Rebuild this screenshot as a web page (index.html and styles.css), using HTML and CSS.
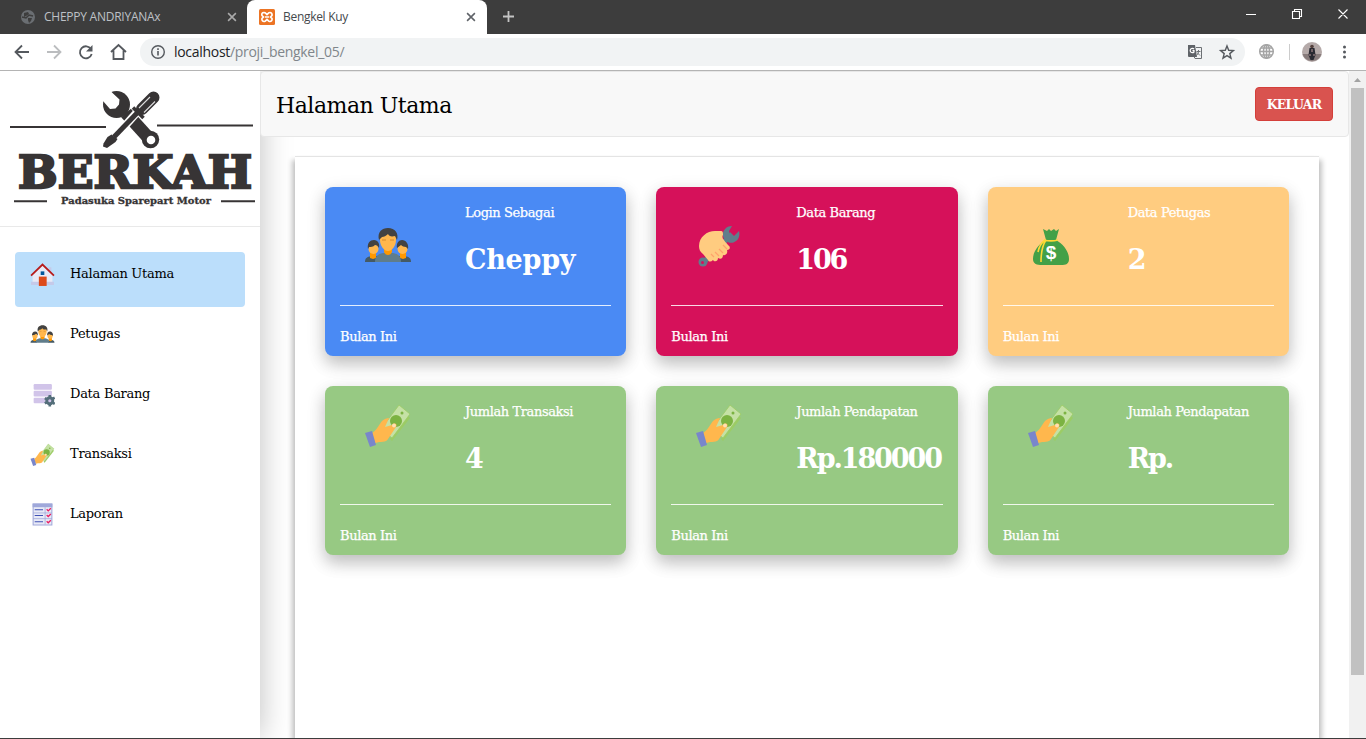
FILE: index.html
```html
<!DOCTYPE html>
<html lang="id">
<head>
<meta charset="utf-8">
<title>Bengkel Kuy</title>
<link rel="stylesheet" href="styles.css">
</head>
<body>
<svg class="sprite" aria-hidden="true">
  <symbol id="people" viewBox="0 0 48 48">
    <path fill="#455a64" d="M1 40c0-4 2-5 6-6h6v6zM47 40c0-4-2-5-6-6h-6v6z"/>
    <path fill="#ff9800" d="M6 29h6v7l-3 1-3-1zM36 29h6v7l-3 1-3-1z"/>
    <circle cx="9.500" cy="27" r="5" fill="#ffb74d"/><circle cx="38.500" cy="27" r="5" fill="#ffb74d"/>
    <path fill="#424242" d="M4 27c-1-6 2-9 6-9 4 0 6 4 5 8-1-2-2-3-4-3-2 2-4 2-6 2zM33 26c-1-5 2-8 5-8 4 0 7 4 6 9l-2-2c-2 0-4-1-5-2z"/>
    <path fill="#607d8b" d="M11 40c0-6 3-8 8-9h10c5 1 8 3 8 9z"/>
    <path fill="#ff9800" d="M20 25h8v5c-1 2-2 3-4 3s-3-1-4-3z"/>
    <path fill="#ffb74d" d="M16 14c0-5 4-7 8-7s8 2 8 7v4c0 6-4 11-8 11s-8-5-8-11z"/>
    <path fill="#424242" d="M15 18C13 10 18 6 24 6c7 0 11 5 9 12l-2-4c-4 1-6 0-7-2-2 2-4 3-6 3z"/>
    <path stroke="#d58b2d" stroke-width="1" d="M18 18h4M26 18h4"/>
  </symbol>
  <symbol id="money" viewBox="0 0 48 48">
    <path fill="#9ccc65" d="M46 17 28 40l-2-2L43 14z"/>
    <path fill="#c5e1a5" d="M35 4 46 13 28 37 17 28z"/>
    <path fill="none" stroke="#9ccc65" stroke-width=".8" d="M35 4 46 13 28 37 17 28z"/>
    <circle cx="32" cy="20" r="6" fill="#7cb342"/><circle cx="38" cy="12" r="1.500" fill="#7cb342"/>
    <path fill="#ffb74d" d="M8 32c4-2 7-8 10-12 2-2 5-3 7-3l-4 9 7-2c2-3 6-1 4 2l-8 12c-2 4-7 2-13 4z"/>
    <circle cx="30" cy="24.500" r="2" fill="#ffe0b2"/>
    <path fill="#7986cb" d="m1 32 7-2 4 14-6 2z"/>
  </symbol>
</svg>
<div class="window">
  <header class="tabs">
    <div class="tab">
      <svg class="fav" viewBox="0 0 16 16"><circle cx="8" cy="8" r="7" fill="#6a6e72"/><path d="M4 4l4-1 1 2-3 2-2 1M8 9l4 0-1 3-2 2-1-3z" fill="#3d3d3d"/><path d="M2 8l4 1 3-3 4 1" fill="none" stroke="#3d3d3d" stroke-width="1.500"/></svg>
      <span class="tab-title t1">CHEPPY ANDRIYANAx</span>
      <svg class="close" viewBox="0 0 9 9"><path d="M1 1l7 7M8 1L1 8"/></svg>
    </div>
    <div class="tab active">
      <svg class="fav" viewBox="0 0 16 16"><rect width="16" height="16" rx="1.500" fill="#ec7424"/><path d="M5 3.500C3 3.500 2.500 5 3 6.500L4.500 8 3 9.500C2.500 11.500 4 13 6 12.300L8 10.500l2 1.800c2 .7 3.500-.8 3-2.800L11.500 8 13 6.500C13.500 4.500 12 3 10 3.700L8 5.500 6 3.700z" fill="none" stroke="#fff" stroke-width="1.700"/><path d="M6 8h4" stroke="#fff" stroke-width="1.500"/></svg>
      <span class="tab-title t2">Bengkel Kuy</span>
      <svg class="close" viewBox="0 0 9 9"><path d="M1 1l7 7M8 1L1 8"/></svg>
    </div>
    <svg class="plus" viewBox="0 0 13 13"><path d="M6.500 1v11M1 6.500h11"/></svg>
    <svg class="controls" viewBox="0 0 120 34"><path d="M0 14.500h10M46.500 11.500h7v7h-7zM48.500 11.500v-2h7v7h-2M92.500 9.500l9 9M101.500 9.500l-9 9"/></svg>
  </header>
  <div class="toolbar">
    <svg class="nav-icons" viewBox="0 0 140 36">
      <g fill="none" stroke="#55595e" stroke-width="1.800"><path d="M29 18H16M22 11.500 15.500 18l6.500 6.500"/><path stroke="#bbbdbf" d="M47 18h13M54 11.500l6.500 6.500-6.500 6.500"/><path d="M91 15a6 6 0 1 0 .7 5"/><path d="M111 18l7.500-7 7.500 7M113.500 16.500V25h10v-8.500"/></g><path fill="#55595e" d="M92.500 11v6.500H86z"/>
    </svg>
    <div class="address">
      <svg class="info" viewBox="0 0 16 16"><circle cx="8" cy="8" r="6.300" fill="none" stroke="#55595e" stroke-width="1.400"/><path stroke="#55595e" stroke-width="1.600" d="M8 7v4.500M8 4.300v1.600"/></svg>
      <span class="url">localhost<span>/proji_bengkel_05/</span></span>
      <svg class="address-icons" viewBox="0 0 50 20"><path fill="#5f6368" d="M1 3h7l2 12H2q-1 0-1-1z"/><path fill="none" stroke="#6c7074" d="M9 5.500h5.500v11H8l-1-2M9.500 9.500h4M11.500 8v1.500c0 2-1 3-2 4M10 10.500l3 3"/><path fill="none" stroke="#fff" stroke-width="1.200" d="M7 7a2.200 2.200 0 1 0 0 3V8.700H5.500"/><path fill="none" stroke="#55595e" stroke-width="1.400" d="m40 4 1.700 4.300 4.700.3-3.600 3 1.200 4.600-4-2.500-4 2.500 1.200-4.600-3.600-3 4.700-.3z"/></svg>
    </div>
    <svg class="extras" viewBox="0 0 121 36"><g fill="none" stroke="#a5a5a5" stroke-width="1.500"><circle cx="21.500" cy="17.500" r="6.800"/><ellipse cx="21.500" cy="17.500" rx="3" ry="6.800"/><path d="M21.500 11v13M15 17.500h13M16 14h11M16 21h11"/></g><path d="M44.500 10v16" stroke="#ccc"/><circle cx="67" cy="18" r="10" fill="#b5aaa9"/><path fill="#877b7b" d="M57.500 20h19a10 10 0 0 1-19 0z"/><path fill="#292a32" d="M64.500 14h5l1 7-2 5h-3l-2-5z"/><circle cx="67" cy="12.500" r="1.800" fill="#54403c"/><path stroke="#b99" d="M67 15v3M64 21h2M68 21h2"/><g fill="#55595e"><circle cx="99.500" cy="13" r="1.500"/><circle cx="99.500" cy="18" r="1.500"/><circle cx="99.500" cy="23" r="1.500"/></g></svg>
  </div>
  <div class="page">
    <aside class="sidebar">
      <div class="brand">
        <svg viewBox="0 71 260 155">
          <circle cx="116.500" cy="104.500" r="13.500" fill="#373435"/>
          <path d="M126 113 150 139.500" stroke="#373435" stroke-width="13"/>
          <circle cx="150.500" cy="139.500" r="8.700" fill="#373435"/>
          <path fill="#fff" d="M101 94 109 88 112 92.500 119.500 99.500 119 104.500 115.500 108.500 110 109 103 101z"/>
          <circle cx="151" cy="140" r="4.300" fill="#fff"/>
          <g fill="none" stroke="#fff"><path stroke-width="8" d="M139 110 116 136"/><path stroke-width="14.500" d="M139 112 145 106"/></g>
          <g fill="none" stroke="#373435"><path stroke-width="5" d="M139 111 114 137"/><path stroke-width="12" stroke-linecap="round" d="M142 109 153.500 97.500"/><path stroke-width="3.500" d="M133 107.500 143.500 118"/></g>
          <path fill="#373435" d="M111.500 134.500 117.500 139 115.500 142 107 148 103 146.500 103.500 143.500 107.500 137z"/>
          <path d="M139 108 150 97M144 112.500 155 101.500" stroke="#ddd" stroke-width="1.100"/>
          <path d="M10 127h96M157 125.400h96" stroke="#373435" stroke-width="2"/>
          <path d="M14 201.300h33M221 201.300h34" stroke="#373435" stroke-width="2"/>
          <text class="logo-main" x="18" y="187.800" textLength="234" lengthAdjust="spacingAndGlyphs">BERKAH</text>
          <text class="logo-sub" x="61" y="204" textLength="150" lengthAdjust="spacingAndGlyphs">Padasuka Sparepart Motor</text>
        </svg>
      </div>
      <nav class="menu">
        <a class="item current"><svg viewBox="0 0 48 48"><path fill="#e8eaf6" d="M24 6 5 23v19h38V23z"/><path fill="#c5cae9" d="M2 38h44v6H2zM36 10h5v12l-5-4z"/><path fill="none" stroke="#b71c1c" stroke-width="3.500" d="M2 26 24 5l22 21"/><path fill="#01579b" d="M20.500 18h7v7h-7z"/><path fill="#dd4a19" d="M17 28h15v18H17z"/></svg><span>Halaman Utama</span></a>
        <a class="item"><svg><use href="#people"/></svg><span>Petugas</span></a>
        <a class="item"><svg viewBox="0 0 48 48"><g fill="#d1c4e9"><rect x="7" y="4" width="35" height="11" rx="2"/><rect x="7" y="17" width="35" height="11" rx="2"/><rect x="7" y="30" width="35" height="11" rx="2"/></g><g fill="#546e7a"><circle cx="38" cy="36" r="8.500"/><path d="M35.500 25h5v22h-5zM27.200 33.200l2.500-4.300 19 11-2.500 4.300zM29.700 43.200l-2.500-4.300 19-11 2.500 4.300z"/></g><circle cx="38" cy="36" r="3" fill="#d1c4e9"/></svg><span>Data Barang</span></a>
        <a class="item"><svg><use href="#money"/></svg><span>Transaksi</span></a>
        <a class="item"><svg viewBox="0 0 48 48"><path fill="#e8eaf6" stroke="#9fa8da" stroke-width="2" d="M6 4h36v40H6z"/><path fill="#9fa8da" d="M5 3h38v7H5z"/><path stroke="#9fa8da" stroke-width="1.500" d="M6 21h36M6 32h36M29 10v33"/><path stroke="#3f51b5" stroke-width="2" d="M9 15h16M9 26h16M9 38h16"/><path fill="none" stroke="#e91e63" stroke-width="2.500" d="m32 14 3 3 5-5M32 25l3 3 5-5M32 37l3 3 5-5"/></svg><span>Laporan</span></a>
      </nav>
    </aside>
    <main class="content">
      <div class="topbar"><h1>Halaman Utama</h1><a class="logout">KELUAR</a></div>
      <section class="panel">
        <article class="card blue"><div class="card-body"><svg class="card-icon"><use href="#people"/></svg><div><p class="label">Login Sebagai</p><p class="value">Cheppy</p></div></div><p class="foot">Bulan Ini</p></article>
        <article class="card pink"><div class="card-body"><svg class="card-icon" viewBox="0 0 48 48"><path stroke="#607d8b" stroke-width="5" d="M10 39 37 12"/><circle cx="8" cy="40" r="4.500" fill="#607d8b"/><circle cx="7.500" cy="40.500" r="1.500" fill="#d6115a"/><path fill="#607d8b" d="M37 4c-6 0-10 5-9 10 1 6 8 9 13 5 3-2 4-6 3-10l-5 5-4-1-1-4z"/><path fill="#ffcc80" d="M4 24C4 15 12 9 20 9h6c2 0 2 2 2 4-2 3 2 6 5 10 3 2 2 5-1 5 1 3-1 6-4 5 0 3-2 5-5 3 0 4-4 4-5 2-2 2-4 2-5 0l-5-6c-3-2-4-5-4-8z"/><path fill="none" stroke="#ffa36b" stroke-width="1.200" d="m16 32 3 3M20 30l4 4M24 27l4 4M28 23l4 4"/></svg><div><p class="label">Data Barang</p><p class="value number">106</p></div></div><p class="foot">Bulan Ini</p></article>
        <article class="card orange"><div class="card-body"><svg class="card-icon" viewBox="0 0 48 48"><path fill="#43a047" d="M16 7l4 2 2-2 2 2 3-2 2 2 3-2-3 11c7 4 13 11 13 19 0 5-3 6-8 6H15c-5 0-9-1-9-6 0-8 6-15 13-19z"/><path fill="none" stroke="#fdd835" stroke-width="1.600" d="M17 18c4 1 10 1 14 0M18 18c-4 3-6 7-7 12M19 18c-4 6-5 12-5 22"/><text class="coin" x="24" y="37">$</text></svg><div><p class="label">Data Petugas</p><p class="value">2</p></div></div><p class="foot">Bulan Ini</p></article>
        <article class="card green"><div class="card-body"><svg class="card-icon high"><use href="#money"/></svg><div><p class="label">Jumlah Transaksi</p><p class="value">4</p></div></div><p class="foot">Bulan Ini</p></article>
        <article class="card green"><div class="card-body"><svg class="card-icon high"><use href="#money"/></svg><div><p class="label">Jumlah Pendapatan</p><p class="value amount">Rp.180000</p></div></div><p class="foot">Bulan Ini</p></article>
        <article class="card green"><div class="card-body"><svg class="card-icon high"><use href="#money"/></svg><div><p class="label">Jumlah Pendapatan</p><p class="value amount">Rp.</p></div></div><p class="foot">Bulan Ini</p></article>
      </section>
    </main>
    <div class="scrollbar"><svg viewBox="0 0 17 17"><path fill="#a3a3a3" d="M5 11l3.500-4 3.500 4z"/></svg><div class="thumb"></div></div>
  </div>
</div>
</body>
</html>
```
FILE: styles.css
```css
* { box-sizing: border-box; }
body { margin: 0; background: #fff; font-family: "DejaVu Serif", serif; color: #000; }
p, h1 { margin: 0; }
svg { display: block; flex: none; }
.sprite { display: none; }
.window { display: flex; flex-direction: column; height: 739px; overflow: hidden; border-bottom: 1px solid #3d3d3d; }

.tabs { display: flex; height: 34px; flex: none; background: #3d3d3d; font: 12px/34px "Open Sans", sans-serif; color: #bdc1c6; }
.tab { display: flex; align-items: center; width: 247px; padding: 0 10px 0 20px; }
.tab.active { width: 240px; padding: 0 11px 0 12px; background: #fff; border-radius: 8px 8px 0 0; color: #45494d; }
.fav { width: 16px; height: 16px; margin-right: 8px; }
.tab-title { flex: 1; white-space: nowrap; }
.t1 { letter-spacing: -.25px; }
.t2 { letter-spacing: -.3px; }
.close { width: 10px; height: 10px; fill: none; stroke: #aaa; stroke-width: 1.4; }
.active .close { stroke: #5f6368; }
.plus { width: 13px; height: 13px; margin: 10px 0 0 15px; stroke: #c4c4c4; stroke-width: 1.8; }
.controls { width: 120px; height: 34px; margin-left: auto; fill: none; stroke: #fff; stroke-width: 1.1; }

.toolbar { display: flex; height: 37px; flex: none; border-bottom: 1px solid #b4b4b4; background: #fff; }
.nav-icons { width: 140px; height: 36px; }
.address { display: flex; align-items: center; width: 1105px; height: 28px; margin-top: 4px; padding: 0 8px 0 10px; border-radius: 14px; background: #f1f3f4; }
.info { width: 16px; height: 16px; }
.url { flex: 1; margin-left: 8px; font: 14px/28px "Open Sans", sans-serif; letter-spacing: -.3px; color: #202124; }
.url span { color: #80868b; }
.address-icons { width: 50px; height: 20px; }
.extras { width: 121px; height: 36px; }

.page { display: flex; flex: 1; min-height: 0; overflow: hidden; }
.sidebar { width: 260px; flex: none; box-shadow: 0 0 30px rgba(0, 0, 0, .26); }
.brand { height: 156px; border-bottom: 1px solid #e9e9e9; }
.brand svg { width: 260px; height: 155px; }
.logo-main { font: bold 44.5px "DejaVu Serif", serif; fill: #373435; stroke: #373435; stroke-width: 2.4; }
.logo-sub { font: bold 9.5px "DejaVu Serif", serif; fill: #373435; stroke: #373435; stroke-width: .3; }
.menu { display: flex; flex-direction: column; gap: 5px; padding: 25px 15px; }
.item { display: flex; height: 55px; padding: 10px 15px; border-radius: 4px; font-size: 13px; line-height: 23px; letter-spacing: -.28px; }
.item svg { width: 25px; height: 25px; margin-right: 15px; }
.current { background: #bbdefb; }

.content { position: relative; display: flex; flex: 1; flex-direction: column; min-width: 0; }
.topbar { display: flex; justify-content: space-between; height: 66px; flex: none; padding: 15px; border: 1px solid #e7e7e7; border-radius: 4px; background: #f8f8f8; }
.topbar h1 { font-size: 22px; font-weight: 400; line-height: 38px; letter-spacing: -.48px; }
.logout { width: 78px; height: 34px; border: 1px solid #d43f3a; border-radius: 4px; background: #d9534f; color: #fff; font-size: 12.5px; font-weight: 700; line-height: 33px; letter-spacing: -.75px; text-align: center; }
.panel { display: grid; grid-template-columns: repeat(3, minmax(0, 1fr)); grid-auto-rows: 169px; gap: 30px; flex: 1; margin: 20px 30px 0 35px; padding: 30px; box-shadow: 0 -1px 0 #e4e4e4, 3px 3px 5px #c4c4c4, -3px 3px 5px #c4c4c4; background: #fff; }
.card { padding: 0 15px; border-radius: 8px; box-shadow: 0 8px 16px rgba(0, 0, 0, .17), 0 6px 20px rgba(0, 0, 0, .12); color: #fff; }
.blue { background: #4a8af4; }
.pink { background: #d6115a; }
.orange { background: #ffcc80; }
.green { background: #97c983; }
.card-body { display: flex; height: 119px; padding-top: 15px; border-bottom: 1px solid rgba(255, 255, 255, .85); white-space: nowrap; }
.card-icon { width: 48px; height: 48px; margin: 20px 53px 0 24px; }
.card-icon.high { margin-top: 0; }
.label, .foot { font-size: 13px; line-height: 21px; letter-spacing: -.4px; -webkit-text-stroke: .25px #fff; }
.value { margin-top: 16px; font-size: 27px; font-weight: 700; line-height: 41px; letter-spacing: -.25px; }
.value.number { letter-spacing: -2.2px; }
.value.amount { letter-spacing: -2.1px; }
.foot { padding-top: 20px; }
.coin { font: bold 19px "Liberation Sans", sans-serif; fill: #fff; text-anchor: middle; }
.scrollbar { width: 17px; flex: none; background: #f1f1f1; }
.scrollbar svg { width: 17px; height: 17px; }
.thumb { width: 13px; height: 587px; margin-left: 2px; background: #c1c1c1; }
```
